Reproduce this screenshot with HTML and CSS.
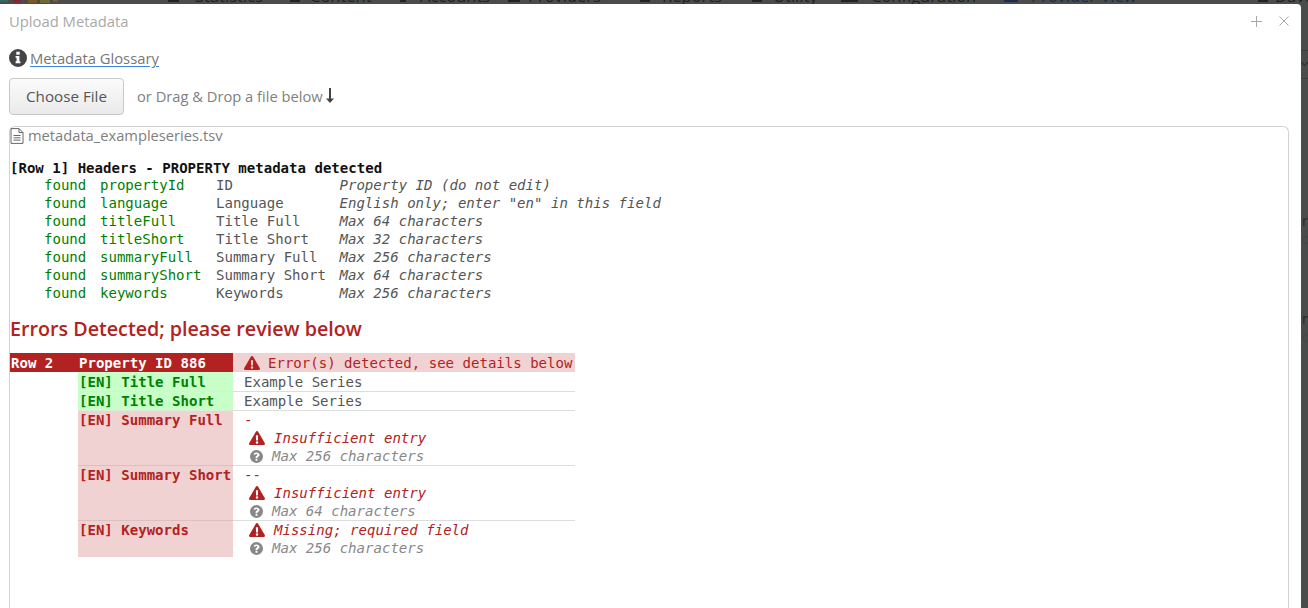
FILE: index.html
```html
<!DOCTYPE html>
<html lang="en">
<head>
<meta charset="utf-8">
<title>Upload Metadata</title>
<link rel="stylesheet" href="styles.css">
</head>
<body>
<svg class="defs" width="0" height="0" aria-hidden="true">
  <symbol id="warn" viewBox="0 0 16 14"><path fill-rule="evenodd" d="M8 0c.5 0 .9.25 1.150.7l6.600 11.300c.5.9-.1 2-1.150 2H1.400C.35 14-.25 12.900.25 12L6.850.7C7.100.25 7.500 0 8 0zM6.900 4.200l.2 5.300h1.800l.2-5.300zM8 10.300a1.250 1.250 0 1 0 0 2.500 1.250 1.250 0 0 0 0-2.500z"/></symbol>
  <symbol id="help" viewBox="0 0 14 14"><path fill-rule="evenodd" d="M7 0a7 7 0 1 1 0 14A7 7 0 0 1 7 0zM6 9.600v2h2v-2zM7.100 2.600c-1.500 0-2.600.7-3.200 1.800l1.300 1c.4-.5.9-1 1.700-1 .6 0 1.100.3 1.100.8s-.4.7-1 1.100C6.300 6.700 6 7.200 6 8v.8h2v-.5c0-.4.3-.6.8-.9.8-.5 1.500-1 1.500-2.200 0-1.600-1.600-2.600-3.200-2.600z"/></symbol>
</svg>
<div class="topstrip">
  <svg class="logo" viewBox="0 0 58 4"><rect x="0" y="0" width="8" height="2" fill="#2f6a66"/><rect x="13" y="0" width="8" height="3" fill="#7c2c38"/><rect x="28" y="0" width="9" height="3" fill="#7a5a2a"/><rect x="40" y="0" width="10" height="3" fill="#6c6a2e"/><rect x="53" y="0" width="5" height="2" fill="#7a5a2a"/></svg>
  <span class="nav"><i class="nav-icon"></i>Statistics</span>
  <span class="nav"><i class="nav-icon"></i>Content</span>
  <span class="nav"><i class="nav-icon"></i>Accounts</span>
  <span class="nav"><i class="nav-icon"></i>Providers</span>
  <span class="nav"><i class="nav-icon"></i>Reports</span>
  <span class="nav"><i class="nav-icon"></i>Utility</span>
  <span class="nav"><i class="nav-icon"></i>Configuration</span>
  <span class="nav link"><i class="nav-icon"></i>Provider View</span>
  <span class="nav"><i class="nav-icon"></i>Dave</span>
</div>
<div class="stage">
  <main class="modal">
    <header class="modal-head">
      <h1 class="modal-title">Upload Metadata</h1>
      <div class="modal-tools">
        <svg class="tool plus" viewBox="0 0 11 11"><path d="M5.500 0v11M0 5.500h11"/></svg>
        <svg class="tool cross" viewBox="0 0 10 10"><path d="M.5.5l9 9M9.500.5l-9 9"/></svg>
      </div>
    </header>
    <p class="glossary">
      <svg class="info" viewBox="0 0 18 18"><path fill-rule="evenodd" d="M9 0a9 9 0 1 1 0 18A9 9 0 0 1 9 0zM7.300 2.800v2.900h3.400V2.800zM6.600 7.100v1.700h1v3.400h-1v2h4.800v-2h-1V7.100z"/></svg>
      <a class="glossary-link" href="#">Metadata Glossary</a>
    </p>
    <div class="chooser">
      <button class="choose" type="button">Choose File</button>
      <span class="hint">or Drag &amp; Drop a file below</span>
      <svg class="down" viewBox="0 0 8 15"><path d="M3 0h2v10.500h3L4 15 0 10.500h3z"/></svg>
    </div>
    <section class="dropzone">
      <div class="filename">
        <svg class="file" viewBox="0 0 14 16"><path d="M1 .6h8l4 4V15.400H1zM9 .6v4h4M3.500 7.500h7M3.500 9.800h7M3.500 12.100h7"/></svg>
        <span>metadata_exampleseries.tsv</span>
      </div>
      <div class="mono report">
        <div class="heading-line">[Row 1] Headers - PROPERTY metadata detected</div>
        <div class="found"><b>found</b><b>propertyId</b><span>ID</span><i>Property ID (do not edit)</i></div>
        <div class="found"><b>found</b><b>language</b><span>Language</span><i>English only; enter "en" in this field</i></div>
        <div class="found"><b>found</b><b>titleFull</b><span>Title Full</span><i>Max 64 characters</i></div>
        <div class="found"><b>found</b><b>titleShort</b><span>Title Short</span><i>Max 32 characters</i></div>
        <div class="found"><b>found</b><b>summaryFull</b><span>Summary Full</span><i>Max 256 characters</i></div>
        <div class="found"><b>found</b><b>summaryShort</b><span>Summary Short</span><i>Max 64 characters</i></div>
        <div class="found"><b>found</b><b>keywords</b><span>Keywords</span><i>Max 256 characters</i></div>
      </div>
      <h2 class="errors">Errors Detected; please review below</h2>
      <div class="mono results">
        <div class="cell row-id">Row 2</div>
        <div class="cell prop-id">Property ID 886</div>
        <div class="cell prop-msg"><svg class="ico"><use href="#warn"/></svg>Error(s) detected, see details below</div>

        <div class="cell key ok tall">[EN] Title Full</div>
        <div class="cell val sep tall">Example Series</div>

        <div class="cell key ok">[EN] Title Short</div>
        <div class="cell val sep">Example Series</div>

        <div class="cell key bad">[EN] Summary Full</div>
        <div class="cell val sep"><div class="entry">-</div><div class="note err"><svg class="ico"><use href="#warn"/></svg><i>Insufficient entry</i></div><div class="note tip"><svg class="ico q"><use href="#help"/></svg><i>Max 256 characters</i></div></div>

        <div class="cell key bad">[EN] Summary Short</div>
        <div class="cell val sep"><div class="entry">--</div><div class="note err"><svg class="ico"><use href="#warn"/></svg><i>Insufficient entry</i></div><div class="note tip"><svg class="ico q"><use href="#help"/></svg><i>Max 64 characters</i></div></div>

        <div class="cell key bad last">[EN] Keywords</div>
        <div class="cell val"><div class="note err"><svg class="ico"><use href="#warn"/></svg><i>Missing; required field</i></div><div class="note tip"><svg class="ico q"><use href="#help"/></svg><i>Max 256 characters</i></div></div>
      </div>
    </section>
  </main>
  <aside class="sidestrip">
    <div class="side-rule first"></div>
    <svg class="side-chevron" viewBox="0 0 7 5"><path d="M0 0l3.500 3.500L7 0"/></svg>
    <div class="side-rule second"></div>
    <div class="side-text a">n</div>
    <div class="side-text b">c</div>
    <div class="side-text c">n</div>
    <div class="side-text b">c</div>
  </aside>
</div>
</body>
</html>
```
FILE: styles.css
```css
* { box-sizing: border-box; }
html, body { margin: 0; height: 100%; overflow: hidden; }
body { background: #4a4c4c; font-family: "Open Sans", sans-serif; color: #555; }
.defs { position: absolute; }

.topstrip { height: 4px; overflow: hidden; background: #4a4c4c; display: flex; align-items: flex-start; font-size: 16.500px; line-height: 1; color: #222; white-space: nowrap; }
.logo { width: 58px; height: 4px; flex: none; margin-right: 110px; }
.nav { display: flex; flex: none; margin-top: -12px; }
.nav-icon { display: block; height: 14px; background: #222; flex: none; }
.nav.link { color: #1c2d4d; }
.nav.link .nav-icon { background: #1c2d4d; }
.nav:nth-of-type(1) { width: 122px; } .nav:nth-of-type(1) .nav-icon { width: 11px; margin-right: 16px; }
.nav:nth-of-type(2) { width: 110px; } .nav:nth-of-type(2) .nav-icon { width: 10px; margin-right: 10px; }
.nav:nth-of-type(3) { width: 108px; } .nav:nth-of-type(3) .nav-icon { width: 6px; margin-right: 14px; }
.nav:nth-of-type(4) { width: 132px; } .nav:nth-of-type(4) .nav-icon { width: 12px; margin-right: 8px; }
.nav:nth-of-type(5) { width: 112px; } .nav:nth-of-type(5) .nav-icon { width: 10px; margin-right: 12px; }
.nav:nth-of-type(6) { width: 89px; } .nav:nth-of-type(6) .nav-icon { width: 10px; margin-right: 11px; }
.nav:nth-of-type(7) { width: 163px; } .nav:nth-of-type(7) .nav-icon { width: 17px; margin-right: 13px; }
.nav:nth-of-type(8) { width: 254px; } .nav:nth-of-type(8) .nav-icon { width: 14px; margin-right: 13px; }
.nav:nth-of-type(9) { width: 50px; } .nav:nth-of-type(9) .nav-icon { width: 10px; margin-right: 7px; }

.stage { display: flex; height: 604px; }
.modal { width: 1301px; flex: none; background: #fff; padding: 0 12px 0 9px; border-radius: 0 4px 0 0; overflow: hidden; }

.sidestrip { flex: 1; overflow: hidden; color: #2a2a2a; font-size: 14px; line-height: 18px; }
.side-rule { height: 1px; background: #3c3e3e; }
.side-rule.first { margin-top: 46px; }
.side-rule.second { margin-top: 11px; margin-bottom: 133px; }
.side-chevron { display: block; width: 7px; height: 5px; margin-top: 11px; fill: none; stroke: #333; stroke-width: 1.500; }
.side-text { padding-left: 1px; }
.side-text.b { color: #3a4a4a; }
.side-text.c { margin-top: 62px; }

.modal-head { display: flex; justify-content: space-between; align-items: center; height: 35px; }
.modal-title { margin: 0; font-size: 14.800px; font-weight: 400; color: #a9a9a9; line-height: 35px; }
.modal-tools { display: flex; align-items: center; gap: 17px; margin-top: -1px; }
.tool { fill: none; stroke: #a8a8a8; stroke-width: 1; }
.tool.plus { width: 11px; height: 11px; }
.tool.cross { width: 10px; height: 10px; }

.glossary { display: flex; align-items: center; gap: 3px; margin: 10px 0 0; height: 18px; font-size: 14.800px; }
.info { width: 18px; height: 18px; fill: #454545; }
.glossary-link { color: #777; text-decoration: underline; text-decoration-color: #3b86d6; text-underline-offset: 2px; }

.chooser { display: flex; align-items: center; margin-top: 11px; height: 37px; font-size: 14.700px; color: #808080; }
.choose { width: 115px; height: 37px; border: 1px solid #c8c8c8; border-radius: 4px; background: linear-gradient(#fbfbfb, #eaeaea); font: 15.200px "Open Sans", sans-serif; color: #555; padding: 0 0 2px; }
.hint { margin: -2px 0 0 13px; }
.down { width: 8px; height: 15px; margin: -3px 0 0 3px; fill: #444; }

.dropzone { margin-top: 11px; height: 500px; border: 1px solid #d2d2d2; border-bottom: 0; border-radius: 6px 6px 0 0; }
.filename { display: flex; align-items: center; gap: 4px; height: 18px; font-size: 14.700px; color: #808080; }
.filename span { margin-top: -2px; }
.file { width: 14px; height: 16px; fill: none; stroke: #666; stroke-width: 1; }

.mono { font-family: "DejaVu Sans Mono", monospace; font-size: 14.060px; line-height: 18px; }
.report { margin-top: 14px; }
.heading-line { font-weight: 700; color: #111; white-space: pre; height: 17px; }
.found { display: grid; grid-template-columns: 56px 116px 123.500px 1fr; padding-left: 34px; color: #555; white-space: pre; }
.found b { font-weight: 400; color: #008000; }
.found i { color: #555; }

.errors { margin: 13px 0 0; font-size: 19.700px; font-weight: 600; line-height: 27px; color: #b22222; }

.results { display: grid; grid-template-columns: 68px 155px 342px; margin-top: 11px; width: 565px; }
.cell { white-space: nowrap; }
.row-id, .prop-id { background: #b22222; color: #fff; font-weight: 700; height: 19px; padding-left: 1px; line-height: 20px; }
.prop-msg { background: #f0d2d2; color: #b22222; height: 19px; padding: 0 0 0 11px; display: flex; align-items: center; line-height: 20px; }
.key { grid-column: 2; padding-left: 1px; font-weight: 700; border-bottom: 1px solid #ddd; }
.key.ok { background: #c8ffc8; color: #008000; height: 19px; border-bottom-color: #d8eed8; }
.key.bad { background: #f0d2d2; color: #b22222; border-bottom-color: #dcc0c0; }
.key.last { border-bottom: 0; }
.val { padding-left: 11px; color: #555; }
.sep { border-bottom: 1px solid #ddd; }
.key.ok.tall, .val.tall { height: 20px; line-height: 20px; }
.entry { color: #b22222; height: 18px; }
.note { padding: 0 0 0 5px; display: flex; align-items: center; height: 18px; }
.note.err { color: #b22222; }
.note.tip { color: #888; }
.ico { width: 16px; height: 14px; fill: #b22222; margin-right: 9px; flex: none; }
.prop-msg .ico { margin-right: 8px; }
.ico.q { width: 13px; height: 13px; fill: #888; margin-right: 9px; margin-left: 1px; }
```
